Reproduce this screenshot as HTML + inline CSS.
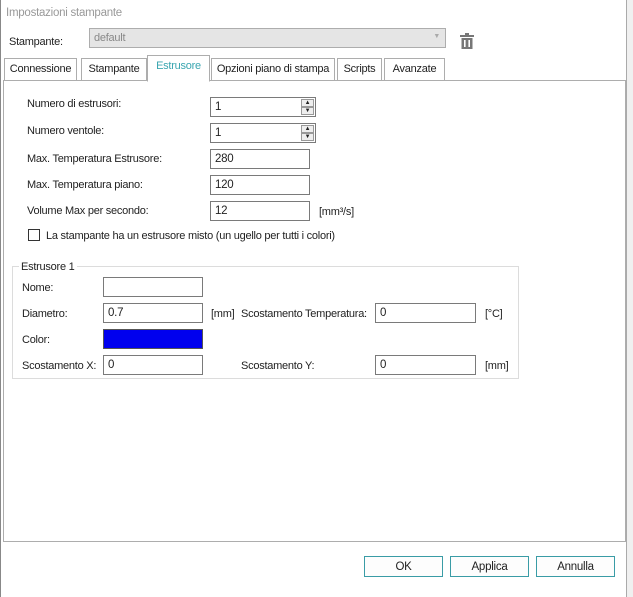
<!DOCTYPE html>
<html><head><meta charset="utf-8"><style>
*{margin:0;padding:0;box-sizing:border-box}
body{width:633px;height:597px;overflow:hidden;background:#f0f0f0;font-family:"Liberation Sans",sans-serif;font-size:11px;letter-spacing:-0.25px;color:#222;position:relative}
.a{position:absolute;white-space:nowrap}
.dlg{position:absolute;left:0;top:0;width:627px;height:597px;background:#fff;border-left:1px solid #888;border-right:1px solid #aaa}
.in{position:absolute;height:20px;border:1px solid #7a7a7a;background:#fff;padding:3px 0 0 4px;font-size:11.5px;white-space:nowrap}
.l{position:absolute;white-space:nowrap;transform:translateY(-50%);margin-top:1px}
.tab{position:absolute;top:58px;height:22px;border:1px solid #adadad;border-bottom:none;background:#fff;padding:4px 0 0;text-align:center;white-space:nowrap}
.btn{position:absolute;top:556px;width:79px;height:21px;border:1px solid #3a9ca6;background:#fdfdfd;text-align:center;padding-top:4px;font-size:11.5px}
.sp{position:absolute;right:1px;width:13px;height:8px;border:1px solid #999;background:#eee;font-size:6px;line-height:6px;text-align:center}
</style></head><body>
<div class="dlg">
<div class="l" style="left:5px;top:12px;color:#999;font-size:11.5px">Impostazioni stampante</div>
<div class="l" style="left:8px;top:41px">Stampante:</div>
<div class="a" style="left:88px;top:28px;width:357px;height:20px;background:#e5e5e5;border:1px solid #adadad;color:#888;padding:3px 4px">default<span style="position:absolute;right:5px;top:4px;font-size:7px;color:#aaa">▼</span></div>
<svg class="a" style="left:459px;top:33px" width="14" height="16" viewBox="0 0 14 16"><rect x="0" y="2" width="14" height="2" fill="#777"/><rect x="5" y="0" width="4" height="2" fill="#777"/><path d="M1.5 5h11v11h-11z" fill="#777"/><rect x="4" y="7" width="1.6" height="7" fill="#fff"/><rect x="8.4" y="7" width="1.6" height="7" fill="#fff"/></svg>
<div style="position:absolute;left:2px;top:80px;width:623px;height:462px;border:1px solid #adadad;background:#fff"></div>
<div class="tab" style="left:3px;width:73px">Connessione</div>
<div class="tab" style="left:80px;width:66px">Stampante</div>
<div class="tab" style="left:146px;top:55px;height:27px;width:63px;color:#3aa6b0;border-bottom:1px solid #fff">Estrusore</div>
<div class="tab" style="left:210px;width:124px">Opzioni piano di stampa</div>
<div class="tab" style="left:336px;width:45px">Scripts</div>
<div class="tab" style="left:383px;width:61px">Avanzate</div>

<div class="l" style="left:26px;top:103px">Numero di estrusori:</div>
<div class="in" style="left:209px;top:97px;width:106px">1<div class="sp" style="top:1px">▲</div><div class="sp" style="top:9px">▼</div></div>
<div class="l" style="left:26px;top:130px">Numero ventole:</div>
<div class="in" style="left:209px;top:123px;width:106px">1<div class="sp" style="top:1px">▲</div><div class="sp" style="top:9px">▼</div></div>
<div class="l" style="left:26px;top:158px">Max. Temperatura Estrusore:</div>
<div class="in" style="left:209px;top:149px;width:100px">280</div>
<div class="l" style="left:26px;top:184px">Max. Temperatura piano:</div>
<div class="in" style="left:209px;top:175px;width:100px">120</div>
<div class="l" style="left:26px;top:210px">Volume Max per secondo:</div>
<div class="in" style="left:209px;top:201px;width:100px">12</div>
<div class="l" style="left:318px;top:211px">[mm³/s]</div>
<div class="a" style="left:27px;top:229px;width:12px;height:12px;border:1px solid #333;background:#fff"></div>
<div class="l" style="left:45px;top:235px">La stampante ha un estrusore misto (un ugello per tutti i colori)</div>

<div class="a" style="left:11px;top:266px;width:507px;height:113px;border:1px solid #dcdcdc"></div>
<div class="l" style="left:18px;top:266px;background:#fff;padding:0 2px">Estrusore 1</div>
<div class="l" style="left:21px;top:287px">Nome:</div>
<div class="in" style="left:102px;top:277px;width:100px"></div>
<div class="l" style="left:21px;top:313px">Diametro:</div>
<div class="in" style="left:102px;top:303px;width:100px">0.7</div>
<div class="l" style="left:210px;top:313px">[mm]</div>
<div class="l" style="left:240px;top:313px">Scostamento Temperatura:</div>
<div class="in" style="left:374px;top:303px;width:101px">0</div>
<div class="l" style="left:484px;top:313px">[°C]</div>
<div class="l" style="left:21px;top:339px">Color:</div>
<div class="a" style="left:102px;top:329px;width:100px;height:20px;background:#0000ee;border:1px solid #555"></div>
<div class="l" style="left:21px;top:365px">Scostamento X:</div>
<div class="in" style="left:102px;top:355px;width:100px">0</div>
<div class="l" style="left:240px;top:365px">Scostamento Y:</div>
<div class="in" style="left:374px;top:355px;width:101px">0</div>
<div class="l" style="left:484px;top:365px">[mm]</div>

<div class="btn" style="left:363px">OK</div>
<div class="btn" style="left:449px">Applica</div>
<div class="btn" style="left:535px">Annulla</div>
</div>
</body></html>
